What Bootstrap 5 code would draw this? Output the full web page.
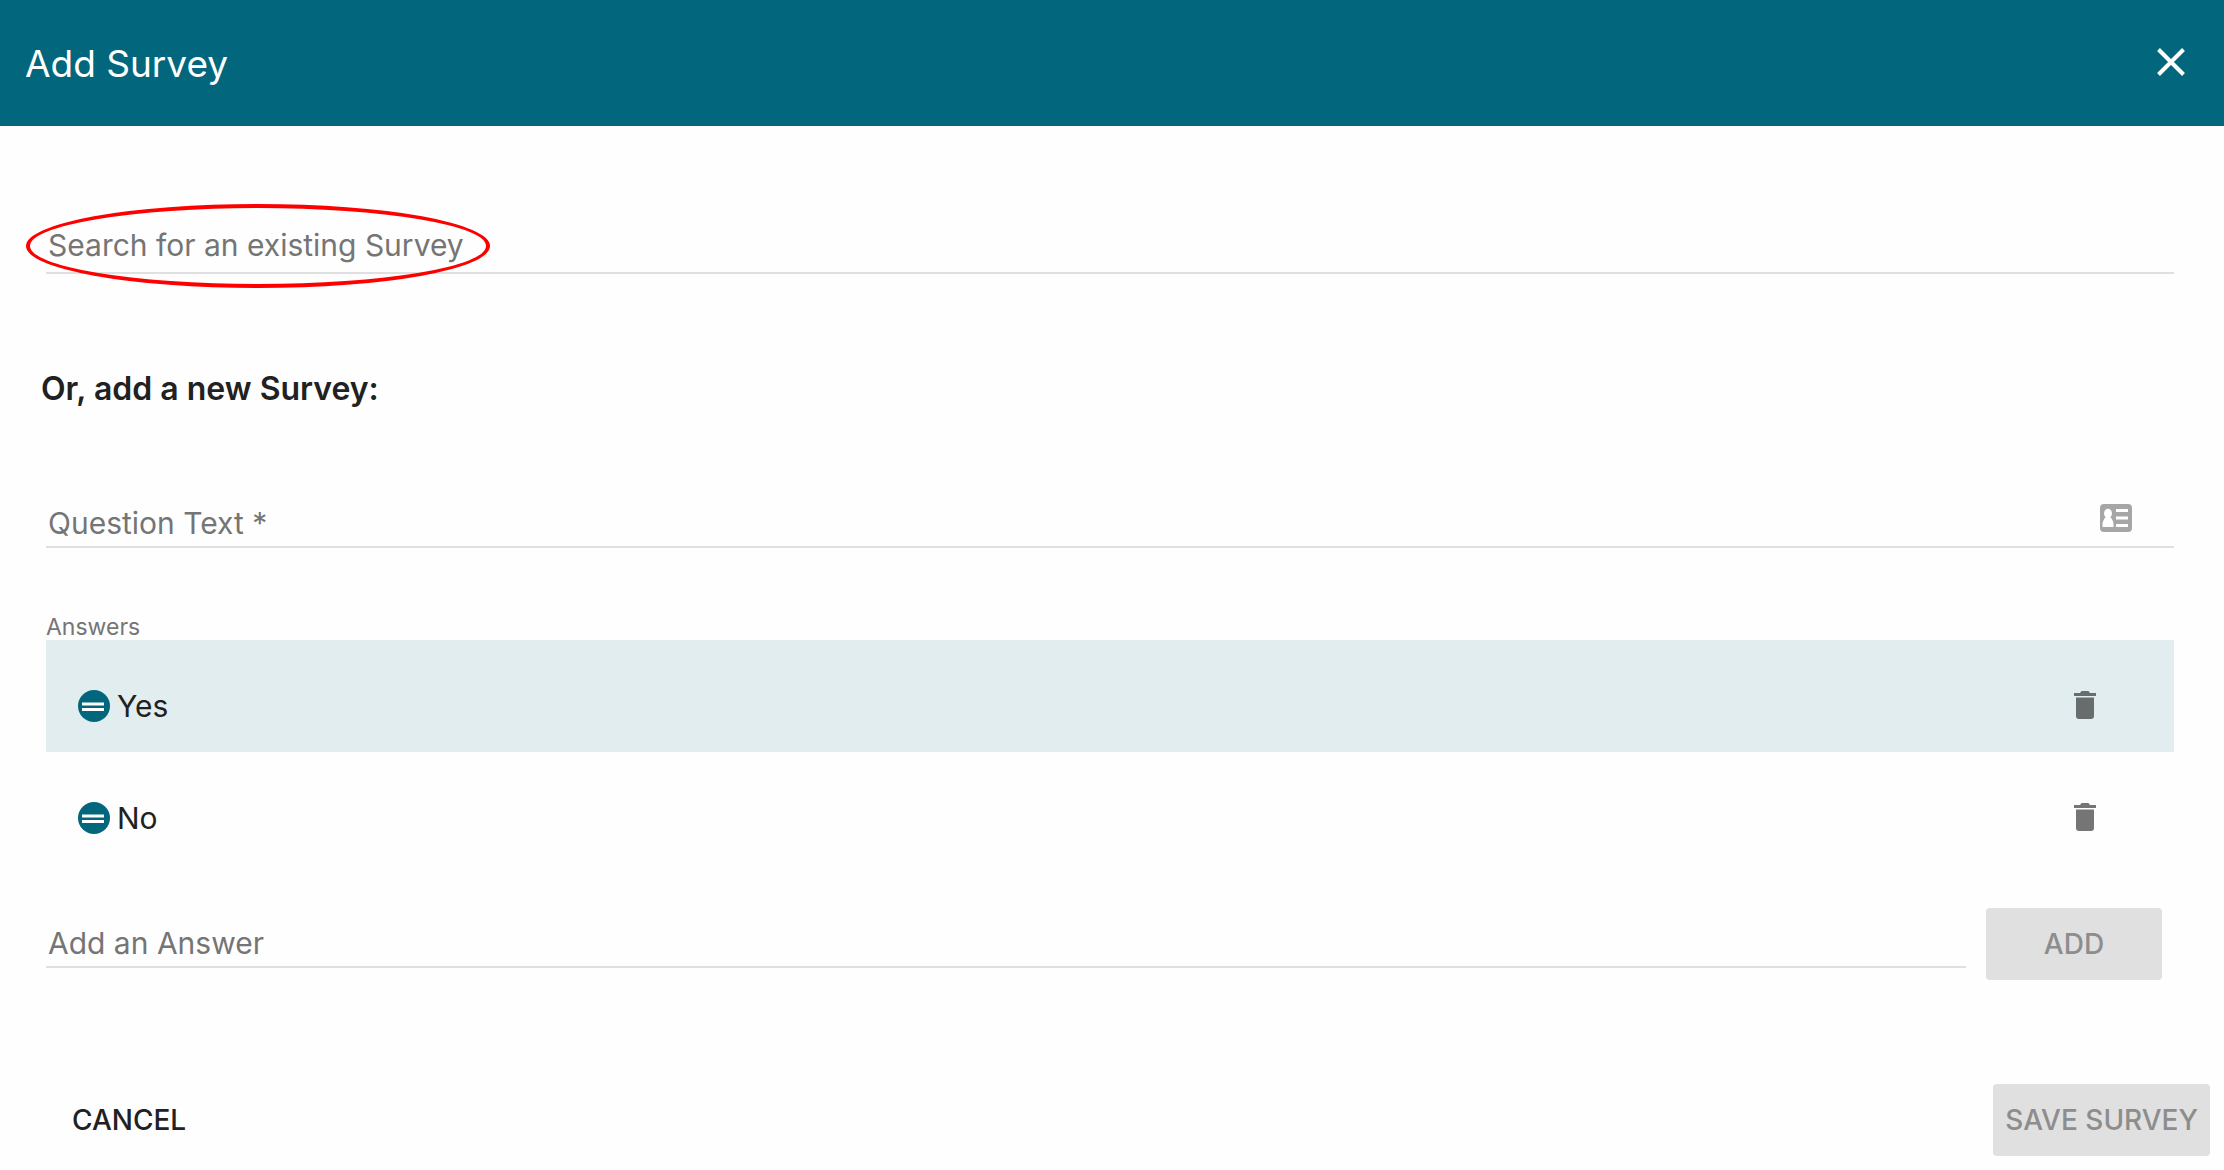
<!DOCTYPE html>
<html lang="en">
<head>
<meta charset="utf-8">
<meta name="viewport" content="width=device-width, initial-scale=1">
<title>Add Survey</title>
<link rel="stylesheet" href="https://cdn.jsdelivr.net/npm/bootstrap@5.3.0/dist/css/bootstrap.min.css">
<style>
  body { font-family: Inter, "Liberation Sans", sans-serif; font-size: 30px; line-height: 40px; color: #212121; background: #fefefe; }
  .dialog-bar { background: #02677d; min-height: 126px; padding: 2px 31px 0 25px; }
  .dialog-title { font-size: 37px; line-height: 48px; font-weight: 400; }
  .icon-btn { line-height: 0; color: inherit; border: 0; border-radius: 4px; }
  .dialog-content { padding: 90px 50px 0 46px; }
  .line-field { border-bottom: 2px solid #e0e0e0; height: 58px; }
  .line-field > .form-control { height: 56px; min-height: 56px; padding: 12px 2px 0; font-size: 30px; line-height: 40px; color: #212121; border: 0; border-radius: 0; background: transparent; }
  .line-field > .form-control:focus { box-shadow: none; background: transparent; }
  .line-field > label { height: 56px; padding: 13px 2px 0; line-height: 40px; color: #757575; border: 0; }
  .line-field.search-field > label { padding-top: 9px; }
  .line-field > .form-control:focus ~ label { opacity: 1; transform: translateY(-24px) scale(.75); }
  .callout-ring { position: absolute; left: -20px; top: -12px; width: 464px; height: 84px; border: 4px solid #f00; border-radius: 50%; pointer-events: none; }
  .new-title { font-size: 32px; line-height: 40px; font-weight: 600; margin: 95px 0 81px -5px; }
  .contact-icon { position: absolute; right: 42px; top: 14px; color: #a6a6a6; line-height: 0; }
  .answers-title { font-size: 23px; line-height: 28px; font-weight: 400; color: #757575; margin: 65px 0 0; height: 27px; }
  .answer-row { height: 112px; padding: 20px 70px 0 32px; gap: 7px; }
  .answer-row.active-row { background: #e1edee; }
  .trash-btn { color: rgba(0, 0, 0, .54); }
  .add-row { gap: 20px; padding: 44px 12px 0 0; }
  .add-row .line-field { margin-bottom: 12px; }
  .action-btn { font-size: 28px; line-height: 40px; font-weight: 500; height: 72px; padding: 0 12px; border: 0; border-radius: 4px; color: #212121; }
  .action-btn:disabled { background: #e0e0e0; color: #8d8d8d; opacity: 1; }
  .add-btn { width: 176px; }
  .dialog-actions { padding: 104px 14px 14px 60px; }
</style>
<script src="https://cdn.jsdelivr.net/npm/bootstrap@5.3.0/dist/js/bootstrap.bundle.min.js"></script>
</head>
<body>
<header class="dialog-bar d-flex align-items-center justify-content-between text-white">
  <h1 class="dialog-title mb-0">Add Survey</h1>
  <button type="button" class="icon-btn btn p-0" aria-label="Close">
    <svg width="44" height="44" viewBox="0 0 44 44" fill="none" stroke="currentColor" stroke-width="4"><path d="M9.500 7.500 34.500 32.500M34.500 7.500 9.500 32.500"/></svg>
  </button>
</header>
<form>
  <main class="dialog-content">
    <div class="line-field search-field form-floating">
      <input id="search" class="form-control" type="text" placeholder=" ">
      <label for="search">Search for an existing Survey</label>
      <span class="callout-ring"></span>
    </div>

    <h2 class="new-title">Or, add a new Survey:</h2>

    <div class="line-field form-floating">
      <input id="question" class="form-control" type="text" placeholder=" " required>
      <label for="question">Question Text *</label>
      <span class="contact-icon">
        <svg width="32" height="28" viewBox="0 0 32 28"><rect width="32" height="28" rx="4" fill="currentColor"/><g fill="#fff"><ellipse cx="8" cy="9.500" rx="4" ry="4.700"/><path d="M2.500 23v-2.500c0-3.500 1.800-6 3.500-7.500h4c1.700 1.500 3.500 4 3.500 7.500V23z"/><path d="M16 5h12v3H16zM16 12.500h12v3H16zM16 20h12v3H16z"/></g></svg>
      </span>
    </div>

    <h3 class="answers-title">Answers</h3>
    <ul class="list-unstyled mb-0">
      <li class="answer-row active-row d-flex align-items-center">
        <svg width="32" height="32" viewBox="0 0 32 32"><circle cx="16" cy="16" r="16" fill="#02677d"/><path d="M4 12.500h22v3H4zM4 18h22v3H4z" fill="#fff"/></svg>
        <span class="flex-grow-1">Yes</span>
        <button type="button" class="icon-btn trash-btn btn p-0" aria-label="Delete Yes">
          <svg width="40" height="40" viewBox="-1 1 40 40" fill="currentColor"><path d="M9 8h6l1.500-2h7L25 8h6v3H9zM11 12.500h18V31q0 3-3 3H14q-3 0-3-3z"/></svg>
        </button>
      </li>
      <li class="answer-row d-flex align-items-center">
        <svg width="32" height="32" viewBox="0 0 32 32"><circle cx="16" cy="16" r="16" fill="#02677d"/><path d="M4 12.500h22v3H4zM4 18h22v3H4z" fill="#fff"/></svg>
        <span class="flex-grow-1">No</span>
        <button type="button" class="icon-btn trash-btn btn p-0" aria-label="Delete No">
          <svg width="40" height="40" viewBox="-1 1 40 40" fill="currentColor"><path d="M9 8h6l1.500-2h7L25 8h6v3H9zM11 12.500h18V31q0 3-3 3H14q-3 0-3-3z"/></svg>
        </button>
      </li>
    </ul>

    <div class="add-row d-flex align-items-end">
      <div class="line-field form-floating flex-grow-1">
        <input id="answer" class="form-control" type="text" placeholder=" ">
        <label for="answer">Add an Answer</label>
      </div>
      <button type="button" class="action-btn add-btn btn" disabled>ADD</button>
    </div>
  </main>
  <footer class="dialog-actions d-flex justify-content-between">
    <button type="button" class="action-btn btn">CANCEL</button>
    <button type="submit" class="action-btn btn" disabled>SAVE SURVEY</button>
  </footer>
</form>
</body>
</html>
